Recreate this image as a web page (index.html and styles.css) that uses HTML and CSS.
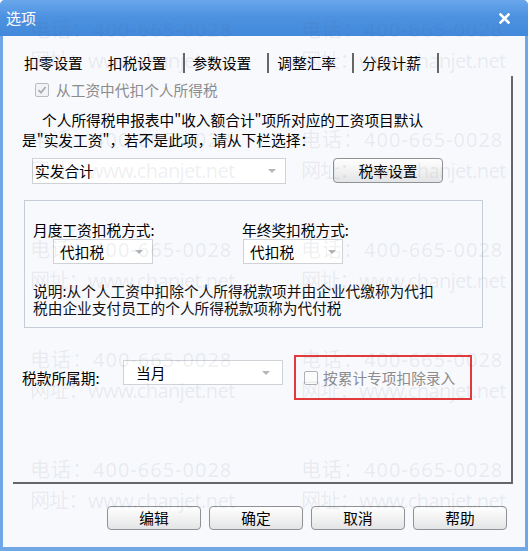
FILE: index.html
```html
<!DOCTYPE html>
<html lang="zh-CN">
<head>
    <meta charset="UTF-8">
    <meta name="viewport" content="width=device-width, initial-scale=1.0">
    <title>选项</title>
    <link rel="stylesheet" href="styles.css">
</head>
<body>
<div class="window">
    <div class="titlebar">
        <span class="title">选项</span>
        <svg class="close" width="11" height="11" viewBox="0 0 11 11">
            <path d="M1.5 1.5 L9.5 9.5 M9.5 1.5 L1.5 9.5" stroke="#fff" stroke-width="2.6" stroke-linecap="square"/>
        </svg>
    </div>

    <div class="client">
        <div class="tabs">
            <span class="tab first">扣零设置</span>
            <span class="tab">扣税设置</span><span class="sep"></span>
            <span class="tab">参数设置</span><span class="sep"></span>
            <span class="tab">调整汇率</span><span class="sep"></span>
            <span class="tab">分段计薪</span><span class="sep"></span>
        </div>

        <div class="panel">
            <div class="check-row disabled">
                <span class="box">
                    <svg width="12" height="12" viewBox="0 0 12 12">
                        <path d="M2.5 6.2 L5 8.6 L9.6 3" fill="none" stroke="#a9adb2" stroke-width="1.8"/>
                    </svg>
                </span>
                从工资中代扣个人所得税
            </div>

            <p class="intro">个人所得税申报表中"收入额合计"项所对应的工资项目默认<br>是"实发工资"，若不是此项，请从下栏选择：</p>

            <div class="row-item">
                <div class="combo wide"><span>实发合计</span><i class="arrow"></i></div>
                <button class="btn rate" type="button">税率设置</button>
            </div>

            <div class="group">
                <div class="cols">
                    <div class="col">
                        <div class="label">月度工资扣税方式:</div>
                        <div class="combo small first-combo"><span>代扣税</span><i class="arrow"></i></div>
                    </div>
                    <div class="col">
                        <div class="label">年终奖扣税方式:</div>
                        <div class="combo small second-combo"><span>代扣税</span><i class="arrow"></i></div>
                    </div>
                </div>
                <p class="note">说明:从个人工资中扣除个人所得税款项并由企业代缴称为代扣<br>税由企业支付员工的个人所得税款项称为代付税</p>
            </div>

            <div class="period">
                <span class="period-label">税款所属期:</span>
                <div class="combo mid"><span>当月</span><i class="arrow"></i></div>
                <div class="marked">
                    <span class="box empty"></span>
                    按累计专项扣除录入
                </div>
            </div>
        </div>

        <div class="buttons">
            <button class="btn" type="button">编辑</button>
            <button class="btn" type="button">确定</button>
            <button class="btn" type="button">取消</button>
            <button class="btn" type="button">帮助</button>
        </div>
    </div>

    <!-- 水印 -->
    <div class="watermark">
        <div><div>电话：400-665-0028</div><div class="site">网址：www.chanjet.net</div></div>
        <div><div>电话：400-665-0028</div><div class="site">网址：www.chanjet.net</div></div>
        <div><div>电话：400-665-0028</div><div class="site">网址：www.chanjet.net</div></div>
        <div><div>电话：400-665-0028</div><div class="site">网址：www.chanjet.net</div></div>
        <div><div>电话：400-665-0028</div><div class="site">网址：www.chanjet.net</div></div>
        <div><div>电话：400-665-0028</div><div class="site">网址：www.chanjet.net</div></div>
        <div><div>电话：400-665-0028</div><div class="site">网址：www.chanjet.net</div></div>
        <div><div>电话：400-665-0028</div><div class="site">网址：www.chanjet.net</div></div>
        <div><div>电话：400-665-0028</div><div class="site">网址：www.chanjet.net</div></div>
        <div><div>电话：400-665-0028</div><div class="site">网址：www.chanjet.net</div></div>
    </div>
</div>
</body>
</html>
```

FILE: styles.css
```css
/* Umum */
body {
    margin: 0;
    font-family: "Noto Sans CJK SC", "Noto Sans", sans-serif;
    font-size: 14.7px;
    color: #111;
}

p {
    margin: 0;
}

/* Jendela */
.window {
    position: relative;
    width: 528px;
    height: 551px;
    box-sizing: border-box;
    padding: 0 3px 4px;
    background: #6fa7e7;
    display: flex;
    flex-direction: column;
    border-radius: 5px 5px 0 0;
    overflow: hidden;
}

.titlebar {
    height: 36px;
    margin: 0 -3px;
    padding: 0 18px 0 6px;
    display: flex;
    align-items: center;
    justify-content: space-between;
    background: linear-gradient(#6aa7ec, #4d92e0 45%, #4289db);
    color: #fff;
}

.title {
    font-size: 15px;
    line-height: 20px;
}

.client {
    flex: 1;
    background: #f8f9fd;
    padding: 14px 12px 0 10px;
}

/* Tab */
.tabs {
    display: flex;
    align-items: center;
    height: 26px;
    padding-left: 11px;
}

.tab {
    line-height: 20px;
    margin-right: 16px;
    color: #000;
}

.tab.first {
    margin-right: 25px;
}

.sep {
    width: 2px;
    height: 20px;
    background: #666;
    margin-right: 8px;
}

.panel {
    height: 408px;
    box-sizing: border-box;
    border-right: 2px solid #666;
    border-bottom: 2px solid #666;
    padding-top: 4px;
}

/* Checkbox */
.check-row {
    display: flex;
    align-items: center;
    gap: 7px;
    margin-left: 22px;
    line-height: 20px;
}

.disabled {
    color: #8c8c8c;
}

.box {
    width: 14px;
    height: 14px;
    box-sizing: border-box;
    border: 1px solid #b9bcc0;
    border-radius: 2px;
    background: #f2f3f5;
    display: flex;
    align-items: center;
    justify-content: center;
}

.box.empty {
    background: #fbfbfc;
    border-color: #aeb1b5;
}

.intro {
    margin: 10px 0 0 9px;
    line-height: 20px;
    text-indent: 20px;
    color: #000;
}

.row-item {
    display: flex;
    align-items: flex-start;
    margin: 8px 0 0 19px;
}

/* Combo */
.combo {
    display: flex;
    align-items: center;
    justify-content: space-between;
    box-sizing: border-box;
    height: 26px;
    background: #fff;
    border: 1px solid #cfd2d6;
    padding: 0 9px 0 2px;
    line-height: 20px;
    color: #000;
}

.arrow {
    width: 0;
    height: 0;
    border-left: 4px solid transparent;
    border-right: 4px solid transparent;
    border-top: 4px solid #b4b6b9;
}

.combo.wide {
    width: 254px;
}

.combo.small {
    width: 100px;
    height: 25px;
    padding-left: 6px;
}

.first-combo {
    margin-left: 20px;
}

.second-combo {
    margin-left: 1px;
    padding-right: 6px;
}

.combo.mid {
    width: 160px;
    height: 25px;
    align-self: flex-start;
    margin-top: 5px;
    padding-left: 12px;
    padding-right: 12px;
}

/* Tombol */
.btn {
    width: 94px;
    height: 24px;
    box-sizing: border-box;
    padding: 0;
    border: 1px solid #8f9193;
    border-radius: 4px;
    background: linear-gradient(#fefefe, #f2f2f2 50%, #e3e4e6);
    font-family: inherit;
    font-size: 14.7px;
    line-height: 22px;
    color: #000;
}

.btn.rate {
    width: 110px;
    height: 25px;
    margin-left: 47px;
}

/* Group */
.group {
    margin: 16px 0 0 11px;
    width: 459px;
    height: 128px;
    box-sizing: border-box;
    border: 1px solid #c6cdd8;
    padding: 20px 0 0 8px;
}

.cols {
    display: flex;
}

.col {
    width: 209px;
}

.label {
    line-height: 18px;
    color: #000;
}

.note {
    margin-top: 18px;
    line-height: 17px;
    color: #111;
}

.period {
    display: flex;
    align-items: center;
    height: 45px;
    margin: 27px 0 0 9px;
}

.period-label {
    width: 101px;
    color: #000;
}

.marked {
    margin-left: 11px;
    width: 178px;
    height: 45px;
    box-sizing: border-box;
    border: 2px solid #e23a3a;
    display: flex;
    align-items: center;
    gap: 5px;
    padding-left: 8px;
    color: #8c8c8c;
}

.buttons {
    display: flex;
    justify-content: flex-end;
    gap: 8px;
    padding-right: 6px;
    margin-top: 22px;
}

/* Watermark */
.watermark {
    position: absolute;
    left: 0;
    top: 14px;
    width: 100%;
    box-sizing: border-box;
    padding-left: 30px;
    display: grid;
    grid-template-columns: 271px 1fr;
    row-gap: 48px;
    pointer-events: none;
    font-family: "Noto Sans", "Noto Sans CJK SC", sans-serif;
    font-size: 20px;
    letter-spacing: 1px;
    line-height: 31px;
    white-space: nowrap;
    color: rgba(80, 95, 115, 0.1);
}

.watermark .site {
    letter-spacing: -0.7px;
}
```
